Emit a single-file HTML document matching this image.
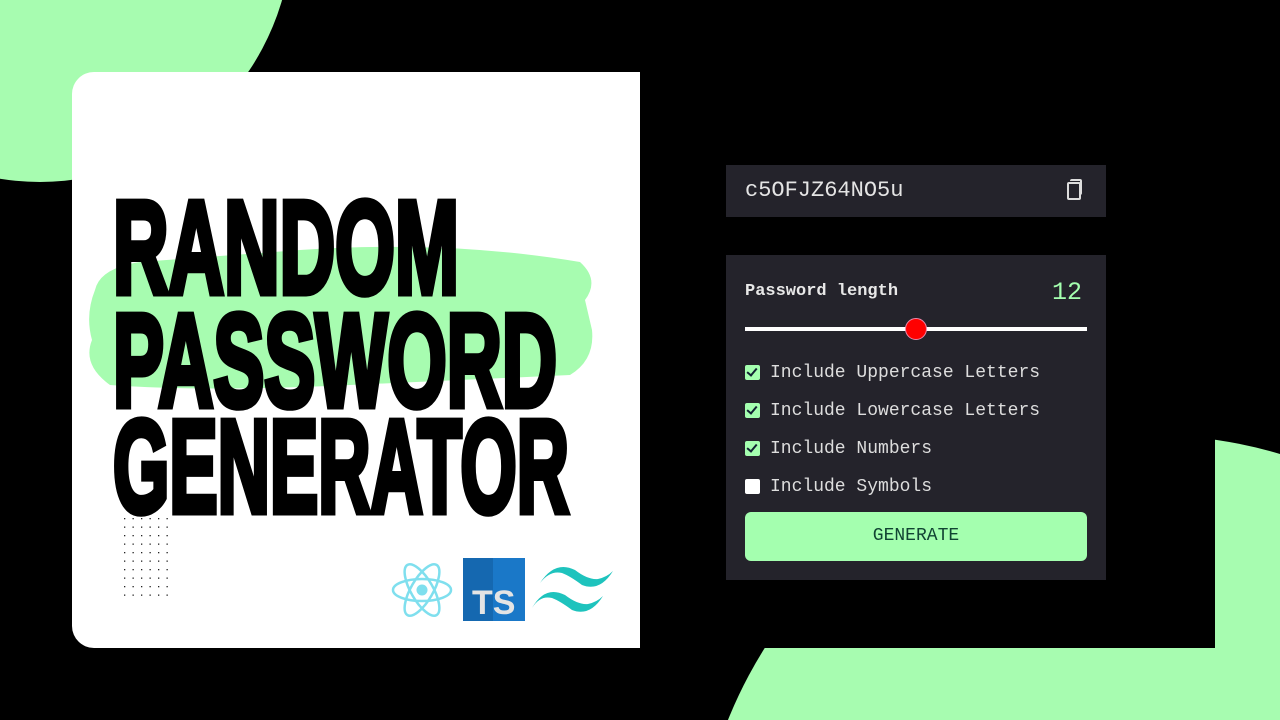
<!DOCTYPE html>
<html><head><style>
html,body{margin:0;width:1280px;height:720px;overflow:hidden}
body{background:#000;font-family:"Liberation Mono",monospace}
#w{position:relative;width:1280px;height:720px;overflow:hidden;background:#000}
.a{position:absolute}
.cb{position:absolute;left:745px;width:15px;height:15px;border-radius:2px;background:#a4ffaf}
.cb::after{content:"";position:absolute;left:4px;top:1px;width:4px;height:8px;border:solid #123;border-width:0 2px 2px 0;transform:rotate(40deg)}
.lb{position:absolute;left:770px;font-size:18px;color:#ddd;line-height:20px}
</style></head><body><div id="w">
<svg class="a" style="left:0;top:0" width="1280" height="720">
<circle cx="40" cy="-70" r="252" fill="#a7fcb0"/>
<circle cx="1150" cy="890" r="455" fill="#a7fcb0"/>
<rect x="640" y="0" width="575" height="648" fill="#000"/>
</svg>
<div class="a" style="left:72px;top:72px;width:568px;height:576px;background:#fff;border-radius:22px 0 0 22px"></div>
<svg class="a" style="left:0;top:0" width="640" height="648">
<path d="M95 290 Q100 268 140 262 L300 250 Q450 240 580 262 Q600 280 585 300 L592 330 Q595 360 570 375 L350 385 Q200 392 110 385 Q82 365 92 340 Q85 315 95 290Z" fill="#a7fcb0"/>
<g font-family="Liberation Sans Narrow,Liberation Sans,sans-serif" font-weight="bold" font-size="132" fill="#000" stroke="#000" stroke-width="7" stroke-linejoin="miter">
<text x="113" y="293" textLength="346" lengthAdjust="spacingAndGlyphs">RANDOM</text>
<text x="113" y="406" textLength="444" lengthAdjust="spacingAndGlyphs">PASSWORD</text>
<text x="113" y="512" textLength="456" lengthAdjust="spacingAndGlyphs">GENERATOR</text>
</g>
<pattern id="d" x="124" y="518" width="8.5" height="8.5" patternUnits="userSpaceOnUse"><rect width="1.3" height="1.3" fill="#222"/></pattern>
<rect x="124" y="518" width="50" height="80" fill="url(#d)"/>
<g transform="translate(422,590)" fill="none" stroke="#7fdfee" stroke-width="2.5">
<ellipse rx="29" ry="11"/><ellipse rx="29" ry="11" transform="rotate(60)"/><ellipse rx="29" ry="11" transform="rotate(-60)"/>
<circle r="5.5" fill="#7fdfee" stroke="none"/></g>
<rect x="463" y="558" width="62" height="63" fill="#1a78c8"/>
<rect x="463" y="558" width="30" height="63" fill="#1568b0"/>
<text x="472" y="614" font-family="Liberation Sans,sans-serif" font-weight="bold" font-size="34" fill="#e4e4e4">TS</text>
<path d="M540 583 Q555 560 575 570 Q588 580 598 579 Q607 577 613 571 Q600 592 582 585 Q570 576 562 573 Q550 570 540 583Z M532 608 Q545 585 565 595 Q578 605 588 604 Q597 602 603 596 Q590 617 572 610 Q560 601 552 598 Q540 595 532 608Z" fill="#1ec3bd"/>
</svg>
<div class="a" style="left:726px;top:165px;width:380px;height:52px;background:#24232b"></div>
<div class="a" style="left:745px;top:178px;font-size:22px;color:#e4e4e4;line-height:26px">c5OFJZ64NO5u</div>
<div class="a" style="left:1067px;top:182px;width:10px;height:14px;border:2px solid #ddd;border-radius:2px"></div>
<div class="a" style="left:1070px;top:179px;width:10px;height:14px;border-top:2px solid #ddd;border-right:2px solid #ddd;border-radius:2px"></div>
<div class="a" style="left:726px;top:255px;width:380px;height:325px;background:#24232b"></div>
<div class="a" style="left:745px;top:282px;font-size:17px;font-weight:bold;color:#e8e8e8">Password length</div>
<div class="a" style="left:1052px;top:278px;font-size:25px;color:#a4ffaf">12</div>
<div class="a" style="left:745px;top:327px;width:342px;height:4px;background:#fff"></div>
<div class="a" style="left:905px;top:318px;width:20px;height:20px;border-radius:50%;background:#f00;border:1.5px solid #e8a"></div>
<div class="cb" style="top:365px"></div><div class="lb" style="top:363px">Include Uppercase Letters</div>
<div class="cb" style="top:403px"></div><div class="lb" style="top:401px">Include Lowercase Letters</div>
<div class="cb" style="top:441px"></div><div class="lb" style="top:439px">Include Numbers</div>
<div class="a" style="left:745px;top:479px;width:15px;height:15px;background:#fff;border-radius:2px"></div><div class="lb" style="top:477px">Include Symbols</div>
<div class="a" style="left:745px;top:512px;width:342px;height:49px;background:#a4ffaf;border-radius:6px;text-align:center;line-height:49px;font-size:18px;color:#143">GENERATE</div>
</div></body></html>
